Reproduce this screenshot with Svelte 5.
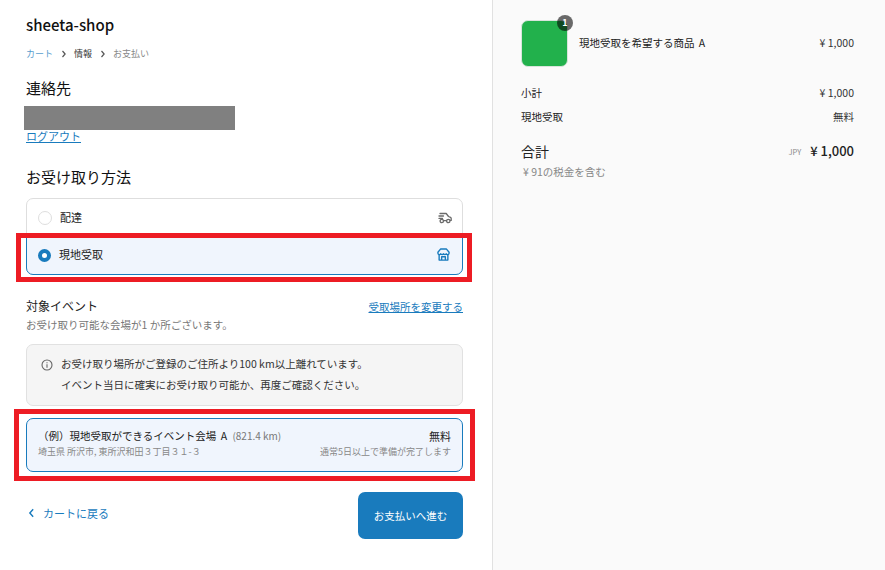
<script lang="ts">
  const crumbs = [
    { label: 'カート', cls: 'link' },
    { label: '情報', cls: 'current' },
    { label: 'お支払い', cls: 'todo' }
  ]
  const rows = [
    { label: '小計', value: '¥ 1,000' },
    { label: '現地受取', value: '無料' }
  ]
</script>

<div class="page">
  <main class="left">
    <h1 class="shop">sheeta-shop</h1>
    <nav class="crumbs">
      {#each crumbs as c, i}
        {#if i > 0}
          <svg viewBox="0 0 8 10" fill="none" stroke="#555" stroke-width="1.6"><path d="M2 1l3.5 4L2 9" /></svg>
        {/if}
        <span class={c.cls}>{c.label}</span>
      {/each}
    </nav>

    <h2 class="contact-title">連絡先</h2>
    <div class="masked"></div>
    <a class="logout" href="#top">ログアウト</a>

    <h2 class="method-title">お受け取り方法</h2>
    <div class="options">
      <div class="option">
        <span class="radio"></span>
        <span class="opt-label">配達</span>
        <svg class="opt-icon" viewBox="0 0 14 14" fill="none" stroke="#6b6b6b" stroke-width="1.3" stroke-linecap="round" stroke-linejoin="round">
          <path d="M2 2.5h6.2l2.3 3 2 .9a1.2 1.2 0 0 1 .7 1.1v1.9h-.8M5.5 9.6h3M1 5h4.5M1 7.4h3.5" />
          <circle cx="3.8" cy="10" r="1.7" />
          <circle cx="10.3" cy="10" r="1.7" />
        </svg>
      </div>
      <div class="option selected">
        <span class="radio on"></span>
        <span class="opt-label">現地受取</span>
        <svg class="opt-icon store" viewBox="0 0 14 14" fill="none" stroke="#197bbd" stroke-width="1.5" stroke-linejoin="round">
          <path d="M4 1h6l3 3.6v1a1.6 1.6 0 0 1-3 .7 2 2 0 0 1-3 0 2 2 0 0 1-3 0 1.6 1.6 0 0 1-3-.7v-1z" />
          <path d="M2.3 7.4V13h9.4V7.4M5 13V9.4h4V13" />
        </svg>
      </div>
    </div>

    <div class="event-head">
      <div>
        <div class="event-title">対象イベント</div>
        <div class="event-sub">お受け取り可能な会場が1 か所ございます。</div>
      </div>
      <a class="change" href="#top">受取場所を変更する</a>
    </div>

    <div class="notice">
      <svg class="info" viewBox="0 0 12 12" fill="none" stroke="#666" stroke-width="1.1">
        <circle cx="6" cy="6" r="5" />
        <path d="M6 5.3v3.4M6 3.2v1.1" />
      </svg>
      <p>お受け取り場所がご登録のご住所より100 km以上離れています。<br />イベント当日に確実にお受け取り可能か、再度ご確認ください。</p>
    </div>

    <div class="venue">
      <div class="venue-row">
        <span class="venue-name">（例）現地受取ができるイベント会場 <i>A</i> <em>(821.4 km)</em></span>
        <span class="venue-price">無料</span>
      </div>
      <div class="venue-row small">
        <span>埼玉県 所沢市, 東所沢和田３丁目３１-３</span>
        <span>通常5日以上で準備が完了します</span>
      </div>
    </div>

    <div class="actions">
      <a class="back" href="#top">
        <svg viewBox="0 0 8 12" fill="none" stroke="#197bbd" stroke-width="1.7"><path d="M6 1.5L2 6l4 4.5" /></svg>
        カートに戻る
      </a>
      <button class="pay">お支払いへ進む</button>
    </div>
  </main>

  <aside class="right">
    <div class="item">
      <div class="thumb"><span class="qty">1</span></div>
      <span class="item-name">現地受取を希望する商品 <i>A</i></span>
      <span class="amount">¥ 1,000</span>
    </div>
    <div class="rows">
      {#each rows as r}
        <div class="row"><span>{r.label}</span><span class="amount">{r.value}</span></div>
      {/each}
    </div>
    <div class="total">
      <span class="total-label">合計</span>
      <span class="total-val"><small>JPY</small><b>¥ 1,000</b></span>
    </div>
    <div class="tax">¥ 91の税金を含む</div>
  </aside>

  <div class="mark mark-a"></div>
  <div class="mark mark-b"></div>
</div>

<style>
  :global(body) {
    margin: 0;
    background: #fff;
  }
  .page {
    position: relative;
    display: flex;
    width: 885px;
    height: 570px;
    overflow: hidden;
    font-family: "Noto Sans CJK JP", "Noto Sans", sans-serif;
    font-size: 11px;
    color: #222;
  }
  .left {
    width: 437px;
    padding: 0 29px 0 26px;
    border-right: 1px solid #e1e1e1;
    flex-shrink: 0;
    box-sizing: content-box;
  }
  h1, h2, p { margin: 0; font-weight: 400; }
  a { color: #197bbd; }
  i { font-style: normal; margin-left: 2px; }
  .shop {
    margin-top: 14px;
    font-size: 15px;
    line-height: 22px;
    font-weight: 500;
    color: #111;
  }
  .crumbs {
    display: flex;
    align-items: center;
    gap: 7.5px;
    margin-top: 10px;
    font-size: 9px;
    line-height: 16px;
  }
  .crumbs svg { width: 6px; height: 8px; }
  .crumbs .link { color: #197bbd; opacity: .75; }
  .crumbs .current { color: #333; }
  .crumbs .todo { color: #888; }
  .contact-title {
    margin-top: 15px;
    font-size: 15px;
    line-height: 22px;
    color: #111;
  }
  .masked {
    width: 211px;
    height: 24px;
    margin: 7px 0 0 -2px;
    background: #808080;
  }
  .logout {
    display: block;
    width: max-content;
    font-size: 11px;
    line-height: 12px;
  }
  .method-title {
    margin-top: 24px;
    font-size: 15px;
    line-height: 22px;
    color: #111;
  }
  .options {
    margin-top: 10px;
    border: 1px solid #dedede;
    border-radius: 7px;
  }
  .option {
    display: flex;
    align-items: center;
    gap: 8px;
    height: 37px;
    padding: 0 10px 0 11px;
    font-size: 11px;
  }
  .option.selected {
    margin: 0 -1px -1px;
    border: 1px solid #197bbd;
    border-radius: 0 0 7px 7px;
    background: #f0f5fd;
    padding: 0 11px;
    box-sizing: content-box;
    height: 37px;
  }
  .radio {
    width: 12px;
    height: 12px;
    border: 1px solid #dedede;
    border-radius: 50%;
    box-sizing: content-box;
    background: #fff;
  }
  .radio.on {
    width: 5px;
    height: 5px;
    border: 4.5px solid #197bbd;
  }
  .opt-label { flex: 1; margin-top: -2px; }
  .selected .opt-label { margin-top: -4px; }
  .opt-icon { width: 14px; height: 14px; }
  .opt-icon.store { width: 13px; height: 13px; margin: -3px 1px 0 0; }
  .event-head {
    display: flex;
    justify-content: space-between;
    margin-top: 22px;
  }
  .event-title {
    font-size: 12px;
    line-height: 18px;
    color: #222;
  }
  .event-sub {
    font-size: 10.5px;
    line-height: 17px;
    margin-top: 1px;
    color: #777;
  }
  .change {
    margin-top: 2px;
    font-size: 10.5px;
    line-height: 16px;
    height: 16px;
  }
  .notice {
    display: flex;
    gap: 8px;
    margin-top: 11px;
    padding: 8px 14px;
    height: 62px;
    box-sizing: border-box;
    background: #f5f5f5;
    border: 1px solid #e1e1e1;
    border-radius: 7px;
    line-height: 21px;
    font-size: 10.5px;
    color: #333;
  }
  .info { width: 12px; height: 12px; margin-top: 6px; flex-shrink: 0; }
  .venue {
    margin-top: 12px;
    height: 54px;
    box-sizing: border-box;
    padding: 8px 11px 0;
    background: #f0f5fd;
    border: 1px solid #197bbd;
    border-radius: 7px;
  }
  .venue-row {
    display: flex;
    justify-content: space-between;
    font-size: 10.5px;
    line-height: 18px;
    color: #222;
  }
  .venue-row.small {
    font-size: 9px;
    line-height: 15px;
    color: #888;
    margin-top: -1px;
  }
  .venue-name em {
    font-style: normal;
    color: #777;
    font-size: 10px;
    margin-left: 3px;
  }
  .venue-price { font-size: 11px; }
  .actions {
    display: flex;
    justify-content: space-between;
    align-items: center;
    margin-top: 20px;
  }
  .back {
    display: flex;
    align-items: center;
    gap: 8px;
    padding-left: 2px;
    text-decoration: none;
    font-size: 11px;
    margin-top: -6px;
  }
  .back svg { width: 7px; height: 10px; }
  .pay {
    width: 105px;
    height: 47px;
    border: none;
    border-radius: 7px;
    background: #197bbd;
    color: #fff;
    font: inherit;
    font-size: 10.5px;
    font-weight: 400;
  }
  .right {
    flex: 1;
    background: #fafafa;
    padding: 20px 31px 0 28px;
  }
  .item {
    display: flex;
    align-items: center;
    gap: 11px;
  }
  .thumb {
    position: relative;
    width: 47px;
    height: 47px;
    border-radius: 7px;
    background: #22b14c;
    border: 1px solid #d9e4dc;
    box-sizing: border-box;
    flex-shrink: 0;
  }
  .qty {
    position: absolute;
    top: -6px;
    right: -6px;
    width: 16px;
    height: 16px;
    border-radius: 50%;
    background: rgba(0, 0, 0, .58);
    color: #fff;
    font-size: 9px;
    font-weight: 700;
    line-height: 16px;
    text-align: center;
  }
  .item-name {
    flex: 1;
    font-size: 10.5px;
    color: #222;
    margin-top: -3px;
  }
  .item .amount { margin-top: -3px; }
  .amount { font-size: 10.5px; color: #333; }
  .rows { margin-top: 14px; }
  .row {
    display: flex;
    justify-content: space-between;
    line-height: 24px;
    font-size: 10.5px;
  }
  .total {
    display: flex;
    justify-content: space-between;
    align-items: center;
    margin-top: 10px;
    line-height: 22px;
  }
  .total-label { font-size: 14px; color: #222; }
  .total-val { display: flex; align-items: center; gap: 9px; }
  .total-val small { font-size: 7.5px; color: #888; margin-top: 2px; }
  .total-val b { font-size: 13px; font-weight: 500; color: #222; }
  .tax {
    font-size: 10.5px;
    line-height: 17px;
    color: #888;
    padding-left: 2px;
  }
  .mark {
    position: absolute;
    border: 5px solid #ed1c24;
    box-sizing: border-box;
  }
  .mark-a { left: 16px; top: 233px; width: 456px; height: 49px; }
  .mark-b { left: 14px; top: 409px; width: 461px; height: 72px; }
</style>
